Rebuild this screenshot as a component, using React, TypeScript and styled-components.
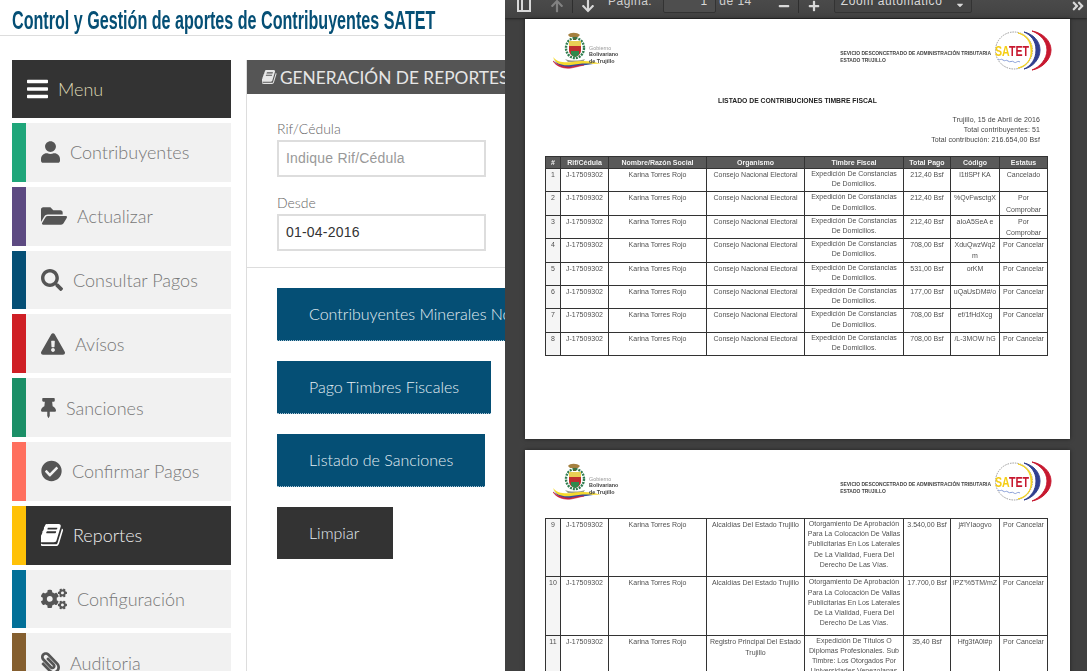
import React from "react";
import styled, { createGlobalStyle } from "styled-components";
import {
  FaBars,
  FaUser,
  FaFolderOpen,
  FaSearch,
  FaExclamationTriangle,
  FaThumbtack,
  FaCheckCircle,
  FaCogs,
  FaPaperclip,
  FaArrowUp,
  FaArrowDown,
  FaMinus,
  FaPlus,
  FaAngleDoubleRight,
  FaCaretDown,
} from "react-icons/fa";

const GlobalStyle = createGlobalStyle`
  html, body {
    margin: 0;
    height: 100%;
    overflow: hidden;
    background: #fff;
  }
  * { box-sizing: border-box; }
`;

function BookIcon(props: any) {
  return (
    <svg viewBox="128 128 1536 1536" fill="currentColor" {...props}>
      <path d="M1639 478q40 57 18 129l-275 906q-19 64-76.5 107.5t-122.5 43.5h-923q-77 0-148.5-53.5t-99.5-131.5q-24-67-2-127 0-4 3-27t4-37q1-8-3-21.5t-3-19.5q2-11 8-21t16.5-23.5 16.5-23.5q23-38 45-91.5t30-91.5q3-10 .5-30t-.5-28q3-11 17-28t17-23q21-36 42-92t25-90q1-9-2.5-32t.5-28q4-13 22-30.5t22-22.5q19-26 42.5-84.5t27.5-96.5q1-8-3-25.5t-2-26.5q2-8 9-18t18-23 17-21q8-12 16.5-30.5t15-35 16-36 19.5-32 26.5-23.5 36-11.5 47.5 5.5l-1 3q38-9 51-9h761q74 0 114 56t18 130l-274 906q-36 119-71.5 153.5t-128.5 34.5h-869q-27 0-38 15-11 16-1 43 24 70 144 70h923q29 0 56-15.5t35-41.5l300-987q7-22 5-57 38 15 59 43zm-1064 2q-4 13 2 22.5t20 9.5h608q13 0 25.5-9.5t16.5-22.5l21-64q4-13-2-22.5t-20-9.5h-608q-13 0-25.5 9.5t-16.5 22.5zm-83 256q-4 13 2 22.5t20 9.5h608q13 0 25.5-9.5t16.5-22.5l21-64q4-13-2-22.5t-20-9.5h-608q-13 0-25.5 9.5t-16.5 22.5z" />
    </svg>
  );
}

function SidebarToggleIcon(props: any) {
  return (
    <svg viewBox="0 0 14 14" fill="none" stroke="currentColor" strokeWidth="2" {...props}>
      <rect x="1" y="-6" width="12" height="18" />
      <path d="M5 -6v18" />
    </svg>
  );
}

function GovLogo() {
  return (
    <svg width="66" height="38" viewBox="0 0 66 38">
      <path d="M15 3c2-3 9-3 12 0l-2 2h-8z" fill="#a5803f" />
      <path d="M20 5h3v3h-3z" fill="#6b5a2b" />
      <ellipse cx="22" cy="16" rx="9" ry="10" fill="none" stroke="#2f7d4f" strokeWidth="2.4" strokeDasharray="2 1" />
      <path d="M16 9h12v5H16z" fill="#e9cf54" />
      <path d="M16 14h12v4c0 4-3 6-6 7-3-1-6-3-6-7z" fill="#bd2e2e" />
      <path d="M18 19h8v3c-1 2-3 3-4 3-1 0-3-1-4-3z" fill="#2e8a4c" />
      <path d="M12 27c5 2 14 2 20 0l-2 3H15z" fill="#9a9a8a" />
      <path d="M0 25c4 5 11 6 19 5 8-1 17-2 29 2-10-1-20 1-29 3-8 1-16-2-19-10z" fill="#f6d92c" />
      <path d="M0 27c3 5 10 7 18 6 7-1 14-2 22-1-7 1-14 2-22 3-8 1-15-2-18-8z" fill="#2d4fa3" />
      <path d="M0 29c3 5 10 8 18 7 5-1 9-2 13-3-5 0-9 1-13 2-8 0-14-2-18-6z" fill="#c81e3c" stroke="#c81e3c" strokeWidth=".6" />
    </svg>
  );
}

function SatetLogo() {
  return (
    <svg width="58" height="41" viewBox="0 0 58 41">
      <circle cx="20" cy="20.5" r="18.5" fill="#fff" stroke="#9a9a9a" strokeWidth="1" strokeDasharray="1.5 1" />
      <path d="M24 3c9 2 14 9 14 17s-5 16-14 18c5-1 8-3 10-6 3-4 3-7 3-12 0-8-5-15-13-17z" fill="#f4d21f" stroke="#f4d21f" />
      <path d="M30 2c9 2 16 9 16 18s-7 17-16 19c7-3 12-10 12-19S37 5 30 2z" fill="#303f8f" stroke="#303f8f" />
      <path d="M38 1c11 2 19 10 19 19s-8 18-19 20c8-3 15-11 15-20S46 4 38 1z" fill="#c7182f" stroke="#c7182f" />
      <text x="1" y="26" fontFamily="'Liberation Sans',sans-serif" fontWeight="700" fontSize="14" textLength="34" lengthAdjust="spacingAndGlyphs">
        <tspan fill="#f5cd12">SA</tspan>
        <tspan fill="#c7182f">TET</tspan>
      </text>
      <path d="M4 29c2 2 3-1 5 1s3-1 5 1 4-1 6 1 3-2 6 0" fill="none" stroke="#8aa0d8" strokeWidth="1" />
    </svg>
  );
}

const navItems = [
  { label: "Contribuyentes", color: "#1fa67a", Icon: FaUser, w: 19 },
  { label: "Actualizar", color: "#5d4a82", Icon: FaFolderOpen, w: 26 },
  { label: "Consultar Pagos", color: "#054f75", Icon: FaSearch, w: 22 },
  { label: "Avísos", color: "#cf1f25", Icon: FaExclamationTriangle, w: 24 },
  { label: "Sanciones", color: "#1b8f67", Icon: FaThumbtack, w: 15 },
  { label: "Confirmar Pagos", color: "#ff6f5e", Icon: FaCheckCircle, w: 21 },
  { label: "Reportes", color: "#ffc107", Icon: BookIcon, w: 22, active: true },
  { label: "Configuración", color: "#027098", Icon: FaCogs, w: 26 },
  { label: "Auditoria", color: "#855f2f", Icon: FaPaperclip, w: 19 },
];

const timbre = "Expedición De Constancias De Domicilios.";
const firstRows = [
  ["1", timbre, "212,40 Bsf", "l1tlSPf KA", "Cancelado"],
  ["2", timbre, "212,40 Bsf", "%QvFwsctgX", "Por Comprobar"],
  ["3", timbre, "212,40 Bsf", "aIoA5SeA e", "Por Comprobar"],
  ["4", timbre, "708,00 Bsf", "XduQwzWq2m", "Por Cancelar"],
  ["5", timbre, "531,00 Bsf", "orKM", "Por Cancelar"],
  ["6", timbre, "177,00 Bsf", "uQaUsDM#/o", "Por Cancelar"],
  ["7", timbre, "708,00 Bsf", "ef/1fHdXcg", "Por Cancelar"],
  ["8", timbre, "708,00 Bsf", "/L-3MOW hG", "Por Cancelar"],
];

const vallas =
  "Otorgamiento De Aprobación Para La Colocación De Vallas Publicitarias En Los Laterales De La Vialidad, Fuera Del Derecho De Las Vías.";
const secondRows = [
  ["9", "Alcaldías Del Estado Trujillo", vallas, "3.540,00 Bsf", "j#IYIaogvo", "Por Cancelar"],
  ["10", "Alcaldías Del Estado Trujillo", vallas, "17.700,0 Bsf", "lPZ'%5TM/mZ", "Por Cancelar"],
  [
    "11",
    "Registro Principal Del Estado Trujillo",
    "Expedición De Títulos O Diplomas Profesionales. Sub Timbre: Los Otorgados Por Universidades Venezolanas",
    "35,40 Bsf",
    "Hfg3fA0l#p",
    "Por Cancelar",
  ],
];

function ColumnSizes() {
  return (
    <colgroup>
      <col width="15" />
      <col width="48" />
      <col width="98" />
      <col width="98" />
      <col width="99" />
      <col width="47" />
      <col width="49" />
      <col width="48" />
    </colgroup>
  );
}

function PageHeader() {
  return (
    <Letterhead>
      <GovBrand>
        <GovLogo />
        <GovName>
          <span>Gobierno</span>
          <b>Bolivariano</b>
          <b>de Trujillo</b>
        </GovName>
      </GovBrand>
      <SatetBrand>
        <SatetName>
          <div>SEVICIO DESCONCETRADO DE ADMINISTRACIÓN TRIBUTARIA</div>
          <div>ESTADO TRUJILLO</div>
        </SatetName>
        <SatetLogo />
      </SatetBrand>
    </Letterhead>
  );
}

export default function App() {
  return (
    <>
      <GlobalStyle />
      <Screen>
        <Main>
          <TopBar>
            <Title>Control y Gestión de aportes de Contribuyentes SATET</Title>
          </TopBar>
          <Body>
            <Sidebar>
              <MenuHead>
                <FaBars />
                <span>Menu</span>
              </MenuHead>
              {navItems.map(({ label, color, Icon, w, active }) => (
                <NavItem key={label} $color={color} $active={active}>
                  <NavIcon $w={w}>
                    <Icon />
                  </NavIcon>
                  <span>{label}</span>
                </NavItem>
              ))}
            </Sidebar>
            <Panel>
              <PanelHead>
                <BookIcon />
                <span>GENERACIÓN DE REPORTES</span>
              </PanelHead>
              <Form>
                <Field>
                  <label>Rif/Cédula</label>
                  <TextInput placeholder="Indique Rif/Cédula" readOnly />
                </Field>
                <Field>
                  <label>Desde</label>
                  <TextInput value="01-04-2016" readOnly />
                </Field>
              </Form>
              <Actions>
                <Button>Contribuyentes Minerales No Metálicos</Button>
                <Button>Pago Timbres Fiscales</Button>
                <Button>Listado de Sanciones</Button>
                <Button $dark>Limpiar</Button>
              </Actions>
            </Panel>
          </Body>
        </Main>
        <Viewer>
          <Toolbar>
            <ToolIcon $left={12}>
              <SidebarToggleIcon width="14" height="14" />
            </ToolIcon>
            <ToolIcon $left={19} $dim>
              <FaArrowUp />
            </ToolIcon>
            <ToolSep $left={8} />
            <ToolIcon $left={8}>
              <FaArrowDown />
            </ToolIcon>
            <ToolText $left={13}>Página:</ToolText>
            <PageBox $left={11}>1</PageBox>
            <ToolText $left={3}>de 14</ToolText>
            <ToolIcon $left={26} $small>
              <FaMinus />
            </ToolIcon>
            <ToolSep $left={8} />
            <ToolIcon $left={9} $small>
              <FaPlus />
            </ToolIcon>
            <ZoomSelect $left={14}>
              <span>Zoom automático</span>
              <FaCaretDown />
            </ZoomSelect>
            <ToolIcon $left={99}>
              <FaAngleDoubleRight />
            </ToolIcon>
          </Toolbar>
          <Pages>
            <Sheet $height={420}>
              <PageHeader />
              <ReportTitle>LISTADO DE CONTRIBUCIONES TIMBRE FISCAL</ReportTitle>
              <ReportInfo>
                <div>Trujillo, 15 de Abril de 2016</div>
                <div>Total contribuyentes: 51</div>
                <div>Total contribución: 216.654,00 Bsf</div>
              </ReportInfo>
              <ReportTable>
                <ColumnSizes />
                <thead>
                  <tr>
                    {["#", "Rif/Cédula", "Nombre/Razón Social", "Organismo", "Timbre Fiscal", "Total Pago", "Código", "Estatus"].map(
                      (h) => (
                        <th key={h}>{h}</th>
                      )
                    )}
                  </tr>
                </thead>
                <tbody>
                  {firstRows.map((r) => (
                    <tr key={r[0]}>
                      <NumCell>{r[0]}</NumCell>
                      <td>J-17509302</td>
                      <td>Karina Torres Rojo</td>
                      <td>Consejo Nacional Electoral</td>
                      <td>{r[1]}</td>
                      <td>{r[2]}</td>
                      <td>{r[3]}</td>
                      <td>{r[4]}</td>
                    </tr>
                  ))}
                </tbody>
              </ReportTable>
            </Sheet>
            <Sheet $height={300}>
              <PageHeader />
              <SecondTable>
                <ColumnSizes />
                <tbody>
                  {secondRows.map((r) => (
                    <tr key={r[0]}>
                      <NumCell>{r[0]}</NumCell>
                      <td>J-17509302</td>
                      <td>Karina Torres Rojo</td>
                      <td>{r[1]}</td>
                      <td>{r[2]}</td>
                      <td>{r[3]}</td>
                      <td>
                        <CodeText>{r[4]}</CodeText>
                      </td>
                      <td>{r[5]}</td>
                    </tr>
                  ))}
                </tbody>
              </SecondTable>
            </Sheet>
          </Pages>
        </Viewer>
      </Screen>
    </>
  );
}

const Screen = styled.div`
  display: flex;
  width: 1087px;
  height: 671px;
  overflow: hidden;
`;

const Main = styled.div`
  width: 505px;
  flex: none;
  overflow: hidden;
  background: #fff;
`;

const TopBar = styled.div`
  height: 36px;
  padding: 0 12px;
  border-bottom: 1px solid #ddd;
  margin-bottom: 24px;
`;

/* no condensed face is installed, so the bold sans is narrowed by hand */
const Title = styled.h1`
  display: inline-block;
  margin: 0;
  font-family: "Liberation Sans", sans-serif;
  font-size: 26px;
  font-weight: 700;
  line-height: 40px;
  color: #054f75;
  white-space: nowrap;
  transform: scaleX(0.62);
  transform-origin: left center;
`;

const Body = styled.div`
  display: flex;
  padding-left: 12px;
  align-items: stretch;
`;

const Sidebar = styled.nav`
  width: 219px;
  flex: none;
  display: flex;
  flex-direction: column;
  gap: 5px;
  font-family: Lato, sans-serif;
  font-weight: 300;
  font-size: 18px;
`;

const MenuHead = styled.div`
  height: 58px;
  background: #333;
  color: #ded7b4;
  display: flex;
  align-items: center;
  padding-left: 15px;
  gap: 10px;

  svg {
    width: 21px;
    height: 24px;
    color: #fff;
  }
`;

const NavItem = styled.div<{ $color: string; $active?: boolean }>`
  height: 58.8px;
  flex: none;
  display: flex;
  align-items: center;
  gap: 10px;
  padding-left: 15px;
  border-left: 14px solid ${(p) => p.$color};
  background: ${(p) => (p.$active ? "#333" : "#f1f1f1")};
  color: ${(p) => (p.$active ? "#eee" : "#777")};
`;

const NavIcon = styled.span<{ $w: number }>`
  display: flex;
  width: ${(p) => p.$w}px;
  height: 26px;
  color: inherit;

  svg {
    width: 100%;
    height: 100%;
    color: #555;
  }

  ${NavItem}:nth-child(8) & svg {
    color: #fff;
  }

  ${NavItem}:last-child & svg {
    transform: scaleX(-1);
  }
`;

const Panel = styled.section`
  flex: none;
  width: 400px;
  margin-left: 15px;
  border-left: 1px solid #ddd;
  height: 620px;
`;

const PanelHead = styled.div`
  height: 34px;
  background: #555;
  color: #e6e6e6;
  display: flex;
  align-items: center;
  padding-left: 15px;
  gap: 3px;
  font-family: Lato, sans-serif;
  font-size: 17.3px;
  white-space: nowrap;

  svg {
    width: 15px;
    height: 14px;
    flex: none;
  }
`;

const Form = styled.div`
  padding: 25px 0 16px 30px;
  border-bottom: 1px solid #ddd;
  display: flex;
  flex-direction: column;
  gap: 16px;
`;

const Field = styled.div`
  display: flex;
  flex-direction: column;
  gap: 1px;

  label {
    font-family: Lato, sans-serif;
    font-size: 14px;
    font-weight: 300;
    line-height: 20px;
    color: #666;
  }
`;

const TextInput = styled.input`
  width: 209px;
  height: 37px;
  padding: 0 7px 1px;
  border: 2px solid #ddd;
  outline: none;
  font-family: "Liberation Sans", sans-serif;
  font-size: 14px;
  letter-spacing: 0.2px;
  color: #333;

  &::placeholder {
    color: #999;
    opacity: 1;
  }
`;

const Actions = styled.div`
  padding: 20px 0 0 30px;
  display: flex;
  flex-direction: column;
  align-items: flex-start;
  gap: 20px;
`;

const Button = styled.div<{ $dark?: boolean }>`
  height: ${(p) => (p.$dark ? 52 : 53)}px;
  min-width: 116px;
  padding: 0 32px 1px;
  display: flex;
  align-items: center;
  font-family: Lato, sans-serif;
  font-size: 16px;
  font-weight: 300;
  white-space: nowrap;
  color: #e4eef3;
  background: ${(p) => (p.$dark ? "#333" : "#054f75")};
  border-bottom: ${(p) => (p.$dark ? "none" : "1px dotted #a9c6d6")};
`;

const Viewer = styled.div`
  width: 582px;
  flex: none;
  height: 671px;
  background: #404040;
  overflow: hidden;
`;

const Toolbar = styled.div`
  height: 18px;
  display: flex;
  align-items: flex-end;
  padding-bottom: 5px;
  overflow: hidden;
  background: linear-gradient(#4a4a4a, #424242);
  box-shadow: 0 1px 2px #222;
  color: #d9d9d9;
  font-family: "Liberation Sans", sans-serif;
  font-size: 12px;
`;

const ToolIcon = styled.span<{ $left: number; $dim?: boolean; $small?: boolean }>`
  display: flex;
  flex: none;
  align-items: center;
  margin-left: ${(p) => p.$left}px;
  opacity: ${(p) => (p.$dim ? 0.4 : 1)};
  font-size: ${(p) => (p.$small ? 12 : 14)}px;
  height: 14px;
`;

const ToolSep = styled.span<{ $left: number }>`
  flex: none;
  width: 1px;
  height: 14px;
  margin-left: ${(p) => p.$left}px;
  background: #2e2e2e;
`;

const ToolText = styled.span<{ $left: number }>`
  flex: none;
  margin-left: ${(p) => p.$left}px;
  line-height: 14px;
  padding-bottom: 5px;
  color: #cfcfcf;
  letter-spacing: 0.5px;
  white-space: nowrap;
  align-self: flex-end;
`;

const PageBox = styled.span<{ $left: number }>`
  flex: none;
  width: 53px;
  height: 24px;
  margin-left: ${(p) => p.$left}px;
  padding: 4px 8px 0 0;
  text-align: right;
  background: #4e4e4e;
  border: 1px solid #333;
  border-radius: 2px;
`;

const ZoomSelect = styled.span<{ $left: number }>`
  flex: none;
  width: 138px;
  height: 24px;
  margin-left: ${(p) => p.$left}px;
  padding: 4px 6px 0 6px;
  display: flex;
  justify-content: space-between;
  background: #444;
  border: 1px solid #333;
  border-radius: 2px;
  letter-spacing: 0.6px;
  white-space: nowrap;

  svg {
    margin-top: 6px;
    font-size: 10px;
  }
`;

const Pages = styled.div`
  padding: 1px 17px 0 20px;
  display: flex;
  flex-direction: column;
  gap: 11px;
`;

const Sheet = styled.div<{ $height: number }>`
  width: 545px;
  height: ${(p) => p.$height}px;
  flex: none;
  background: #fff;
  box-shadow: 0 0 4px rgba(0, 0, 0, 0.5);
  padding: 11px 20px 0 20px;
  font-family: "Liberation Sans", sans-serif;
  font-size: 7px;
  color: #444;
  filter: blur(0.35px);
`;

const Letterhead = styled.div`
  height: 42px;
  display: flex;
  justify-content: space-between;
  align-items: flex-start;
  padding-left: 8px;
`;

const GovBrand = styled.div`
  position: relative;
  margin-top: 2px;
`;

const GovName = styled.div`
  position: absolute;
  left: 36px;
  top: 13px;
  display: flex;
  flex-direction: column;
  font-size: 5.4px;
  line-height: 6.4px;
  color: #444;
  white-space: nowrap;

  span {
    color: #999;
  }
`;

const SatetBrand = styled.div`
  display: flex;
  align-items: flex-start;
  gap: 3px;
  margin-right: -2px;
`;

const SatetName = styled.div`
  margin-top: 19.5px;
  font-size: 4.95px;
  line-height: 7.5px;
  font-weight: 700;
  color: #444;
  white-space: nowrap;
`;

const ReportTitle = styled.div`
  margin-top: 24px;
  text-align: center;
  font-weight: 700;
  font-size: 6.8px;
  line-height: 10px;
  color: #222;
`;

const ReportInfo = styled.div`
  margin-top: 9px;
  padding-right: 10px;
  text-align: right;
  line-height: 10px;
  letter-spacing: 0.1px;
`;

const ReportTable = styled.table`
  margin-top: 11px;
  width: 502px;
  table-layout: fixed;
  border-collapse: collapse;
  font-size: 7px;
  line-height: 11.2px;
  color: #505050;

  th {
    height: 12px;
    padding: 0;
    background: #595959;
    border: 1px solid #333;
    color: #f2f2f2;
    font-weight: 700;
    line-height: 10px;
    white-space: nowrap;
  }

  td {
    padding: 0 2px;
    border: 1px solid #333;
    text-align: center;
    vertical-align: top;
    overflow-wrap: anywhere;
  }

  tbody tr {
    height: 23.4px;
  }

  td:nth-child(5) {
    line-height: 10.2px;
  }
`;

const SecondTable = styled(ReportTable)`
  margin-top: 15px;

  tbody tr {
    height: 58.4px;
  }
`;

const NumCell = styled.td`
  background: #f5f5f5;
`;

const CodeText = styled.span`
  white-space: nowrap;
`;
